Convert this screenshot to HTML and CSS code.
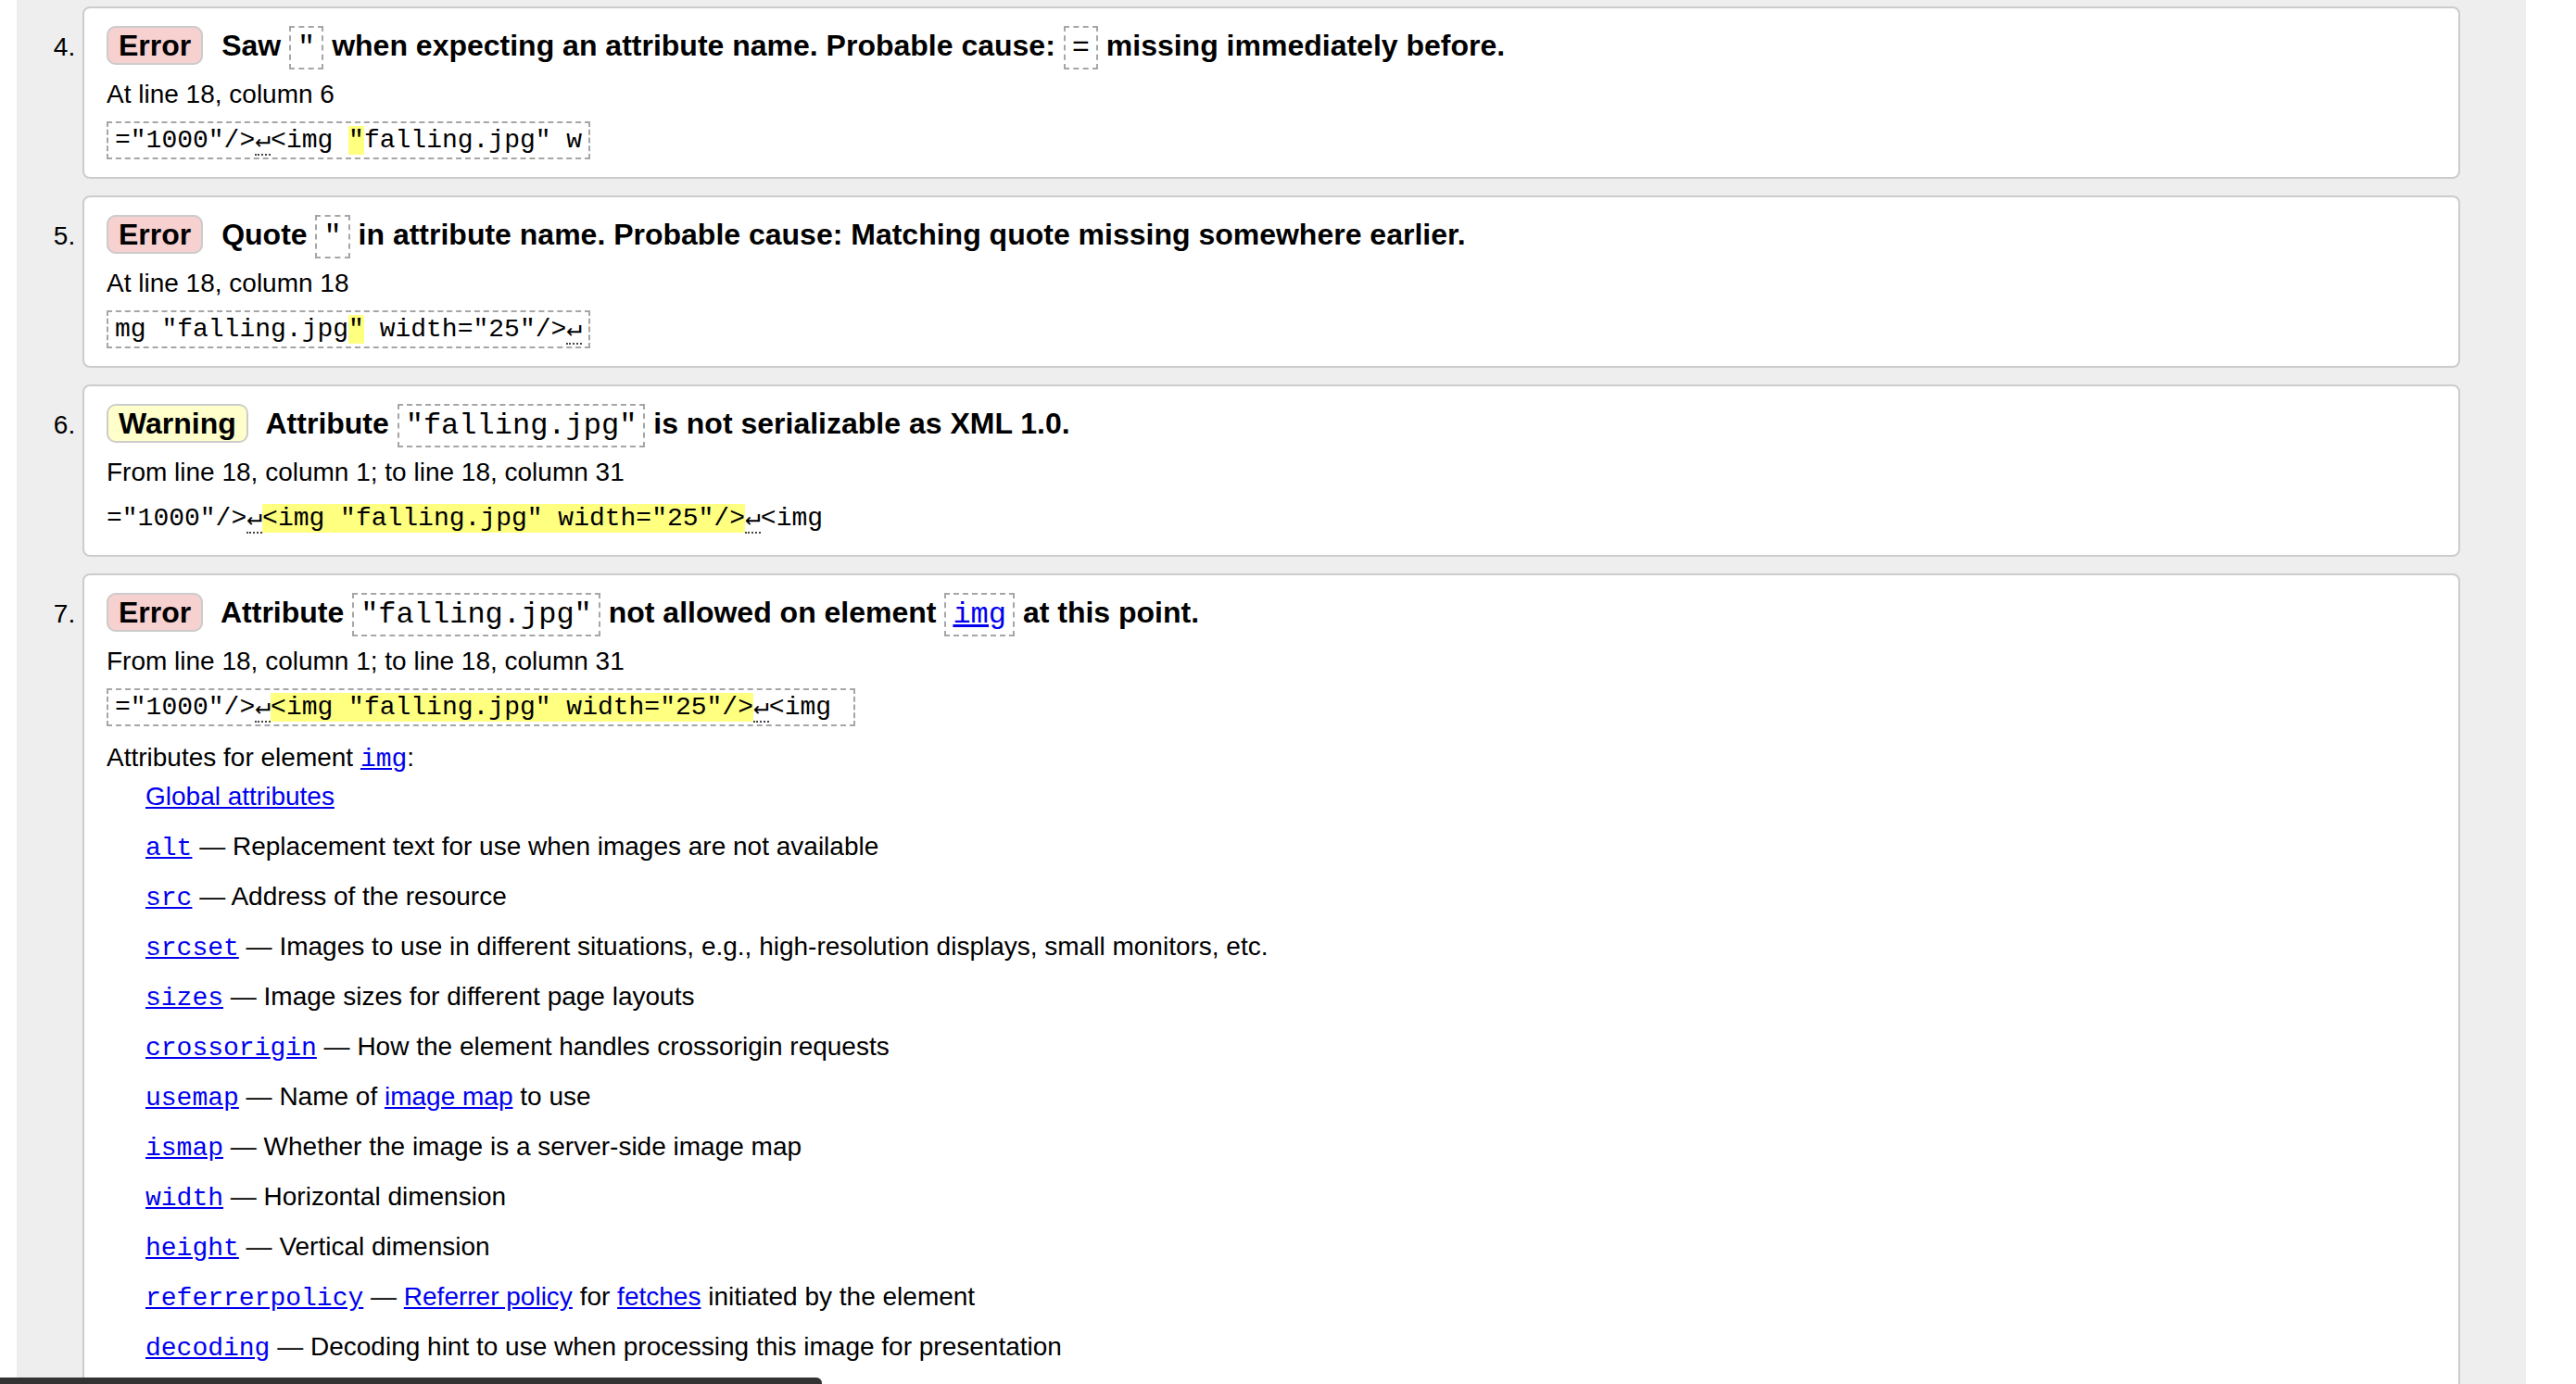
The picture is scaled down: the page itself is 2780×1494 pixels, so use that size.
FILE: index.html
```html
<!DOCTYPE html>
<html lang="en">
<head>
<meta charset="utf-8">
<title>Validation results</title>
<link rel="stylesheet" href="styles.css">
</head>
<body>
<div class="results">
<ol class="messages" start="4">
  <li class="card">
    <p class="msg"><strong class="badge badge-error">Error</strong> <span>Saw <code class="q">"</code> when expecting an attribute name. Probable cause: <code class="q">=</code> missing immediately before.</span></p>
    <p class="loc">At line 18, column 6</p>
    <p class="extract"><code class="box">="1000"/&gt;<b class="lf">↵</b>&lt;img <mark>"</mark>falling.jpg" w</code></p>
  </li>
  <li class="card">
    <p class="msg"><strong class="badge badge-error">Error</strong> <span>Quote <code class="q">"</code> in attribute name. Probable cause: Matching quote missing somewhere earlier.</span></p>
    <p class="loc">At line 18, column 18</p>
    <p class="extract"><code class="box">mg "falling.jpg<mark>"</mark> width="25"/&gt;<b class="lf">↵</b></code></p>
  </li>
  <li class="card">
    <p class="msg"><strong class="badge badge-warning">Warning</strong> <span>Attribute <code class="q">"falling.jpg"</code> is not serializable as XML 1.0.</span></p>
    <p class="loc">From line 18, column 1; to line 18, column 31</p>
    <p class="extract"><code>="1000"/&gt;<b class="lf">↵</b><mark>&lt;img "falling.jpg" width="25"/&gt;</mark><b class="lf">↵</b>&lt;img</code></p>
  </li>
  <li class="card">
    <p class="msg"><strong class="badge badge-error">Error</strong> <span>Attribute <code class="q">"falling.jpg"</code> not allowed on element <code class="q"><a href="#img">img</a></code> at this point.</span></p>
    <p class="loc">From line 18, column 1; to line 18, column 31</p>
    <p class="extract"><code class="box">="1000"/&gt;<b class="lf">↵</b><mark>&lt;img "falling.jpg" width="25"/&gt;</mark><b class="lf">↵</b>&lt;img </code></p>
    <p class="attrs-label">Attributes for element <code class="mono"><a href="#img">img</a></code>:</p>
    <dl class="attrs">
      <dt><a href="#global">Global attributes</a></dt>
      <dd><code class="mono"><a href="#alt">alt</a></code> — Replacement text for use when images are not available</dd>
      <dd><code class="mono"><a href="#src">src</a></code> — Address of the resource</dd>
      <dd><code class="mono"><a href="#srcset">srcset</a></code> — Images to use in different situations, e.g., high-resolution displays, small monitors, etc.</dd>
      <dd><code class="mono"><a href="#sizes">sizes</a></code> — Image sizes for different page layouts</dd>
      <dd><code class="mono"><a href="#crossorigin">crossorigin</a></code> — How the element handles crossorigin requests</dd>
      <dd><code class="mono"><a href="#usemap">usemap</a></code> — Name of <a href="#image-map">image map</a> to use</dd>
      <dd><code class="mono"><a href="#ismap">ismap</a></code> — Whether the image is a server-side image map</dd>
      <dd><code class="mono"><a href="#width">width</a></code> — Horizontal dimension</dd>
      <dd><code class="mono"><a href="#height">height</a></code> — Vertical dimension</dd>
      <dd><code class="mono"><a href="#referrerpolicy">referrerpolicy</a></code> — <a href="#referrer-policy">Referrer policy</a> for <a href="#fetch">fetches</a> initiated by the element</dd>
      <dd><code class="mono"><a href="#decoding">decoding</a></code> — Decoding hint to use when processing this image for presentation</dd>
    </dl>
  </li>
</ol>
</div>
<div class="hbar"></div>
</body>
</html>
```
FILE: styles.css
```css
html, body {
  margin: 0;
  padding: 0;
}

body {
  background: #fff;
  color: #000;
  font-family: "Liberation Sans", Arial, Helvetica, sans-serif;
  height: 1494px;
  overflow: hidden;
}

.results {
  margin-left: 18px;
  width: 2708px;
  min-height: 1494px;
  background: #eee;
}

.messages {
  margin: 0;
  padding: 7px 71px 0 71px;
  font-size: 28px;
  line-height: 40px;
}

.card {
  background: #fff;
  border: 2px solid #ccc;
  border-radius: 8px;
  padding: 15px 24px 19px;
  margin-bottom: 18px;
}

.msg {
  margin: 0;
  font-size: 32px;
  line-height: 50px;
  font-weight: bold;
}

.badge {
  padding: 1px 11px;
  border: 2px solid #ccc;
  border-radius: 10px;
  margin-right: 11px;
}

.badge-error {
  background: #f7d0d0;
}

.badge-warning {
  background: #ffffcc;
}

code {
  font-family: "Liberation Mono", "DejaVu Sans Mono", monospace;
}

.q {
  font-size: 32px;
  font-weight: normal;
  line-height: 1;
  padding: 3px 7px;
  border: 2px dashed #a6a6a6;
  white-space: pre;
}

.loc {
  margin: 8px 0 0;
  line-height: 40px;
}

.extract {
  margin: 10px 0 0;
  font-family: "Liberation Mono", "DejaVu Sans Mono", monospace;
  font-size: 28px;
  line-height: 40px;
  white-space: pre;
}

.extract code {
  font-size: 28px;
  line-height: 1;
}

.extract .box {
  padding: 3px 7px;
  border: 2px dashed #a6a6a6;
}

mark {
  background: #ffff80;
  color: inherit;
}

.lf {
  font-weight: normal;
  font-family: "DejaVu Sans Mono", "Liberation Mono", monospace;
  border-bottom: 2px dotted #444;
}

a {
  color: #0000ee;
  text-decoration: underline;
}

.mono {
  font-size: 28px;
  line-height: 1;
}

.attrs-label {
  margin: 14px 0 0;
  line-height: 40px;
}

.attrs {
  margin: 2px 0 0 42px;
}

.attrs dt,
.attrs dd {
  margin: 0 0 14px;
  line-height: 40px;
}

.hbar {
  position: fixed;
  left: 0;
  bottom: 0;
  width: 887px;
  height: 7px;
  background: #333;
  border-top-right-radius: 6px;
}
```
